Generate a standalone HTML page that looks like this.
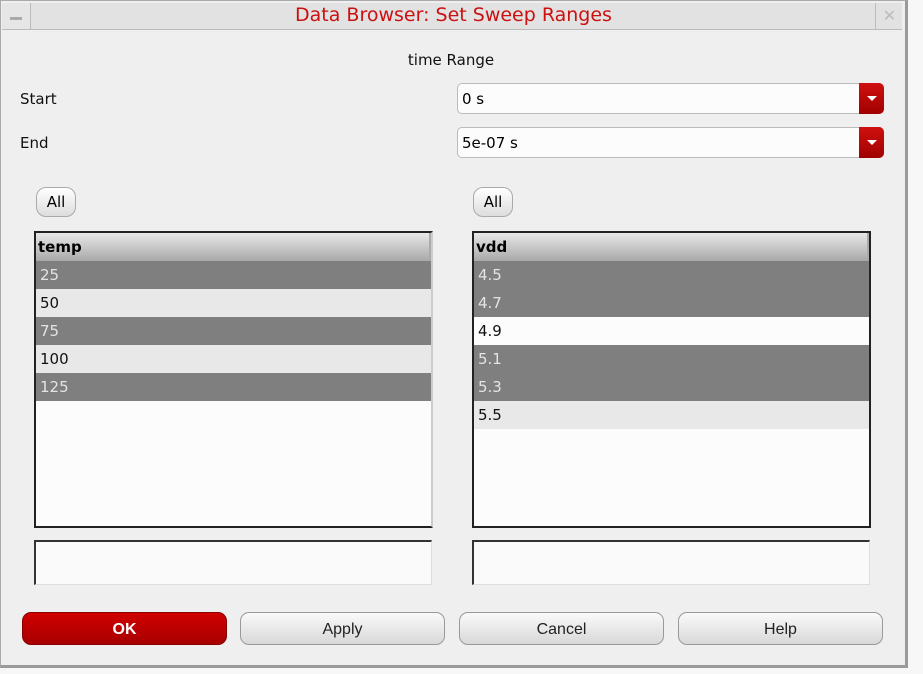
<!DOCTYPE html>
<html><head><style>
body{margin:0;width:923px;height:674px;background:#f7f7f7;font-family:"DejaVu Sans","Liberation Sans",sans-serif;position:relative;overflow:hidden}
.win{position:absolute;left:0;top:0;width:904px;height:664px;background:#efefef;border-right:3px solid #9a9a9a;border-bottom:3px solid #9a9a9a;border-left:1px solid #aaa;border-top:1px solid #aaa}
.a{position:absolute}
.tb{left:1px;top:2px;width:900px;height:26px;background:#e2e2e2;border-bottom:1px solid #bbb}
.title{left:30px;width:845px;top:3px;text-align:center;color:#cc1010;font-size:19px}
.lbl{font-size:15px;color:#111}
.combo{height:31px;background:#fcfcfc;border:1px solid #bbb;border-radius:5px;font-size:15px;line-height:30px;padding-left:4px;box-sizing:border-box}
.arr{position:absolute;right:-1px;top:-1px;width:25px;height:31px;background:linear-gradient(#d01010,#a00000);border-radius:0 5px 5px 0}
.arr:after{content:"";position:absolute;left:8px;top:13px;border-left:5px solid transparent;border-right:5px solid transparent;border-top:5px solid #fff}
.all{width:40px;height:30px;border:1px solid #aaa;border-radius:10px;background:linear-gradient(#fff,#ddd);font-size:15px;text-align:center;line-height:29px;box-sizing:border-box}
.list{background:#fcfcfc;border:2px solid #222;border-right-color:#ccc;border-bottom-color:#222;box-sizing:border-box;overflow:hidden}
.hd{height:28px;background:linear-gradient(#e8e8e8,#a8a8a8);font-weight:bold;font-size:15px;line-height:28px;padding-left:2px;border-right:2px solid #aaa}
.r{height:28px;line-height:28px;font-size:15px;padding-left:4px}
.d{background:#7f7f7f;color:#e4e4e4}.l{background:#e8e8e8;color:#111}.w{background:#fcfcfc;color:#111}
.tx{background:#fafafa;border-top:2px solid #333;border-left:2px solid #333;border-right:1px solid #ddd;border-bottom:1px solid #ddd;box-sizing:border-box}
.btn{top:611px;width:205px;height:33px;border:1px solid #999;border-radius:9px;background:linear-gradient(#fafafa,#d8d8d8);font-family:"Liberation Sans",sans-serif;font-size:16px;text-align:center;line-height:33px;box-sizing:border-box;color:#222}
</style></head><body>
<div class="win">
<div class="a tb"></div>
<div class="a" style="left:1px;top:2px;width:28px;height:26px;border-right:1px solid #bbb;background:#e6e6e6"><div class="a" style="left:8px;top:14px;width:12px;height:3px;background:#aaa"></div></div>
<div class="a" style="left:874px;top:2px;width:27px;height:26px;border-left:1px solid #bbb;color:#bbb;font-size:16px;text-align:center;line-height:26px">✕</div>
<div class="a title">Data Browser: Set Sweep Ranges</div>
<div class="a lbl" style="left:0;width:900px;text-align:center;top:50px">time Range</div>
<div class="a lbl" style="left:19px;top:89px">Start</div>
<div class="a lbl" style="left:19px;top:133px">End</div>
<div class="a combo" style="left:456px;top:82px;width:427px">0 s<div class="arr"></div></div>
<div class="a combo" style="left:456px;top:126px;width:427px">5e-07 s<div class="arr"></div></div>
<div class="a all" style="left:35px;top:186px">All</div>
<div class="a all" style="left:472px;top:186px">All</div>
<div class="a list" style="left:33px;top:230px;width:399px;height:297px">
<div class="hd">temp</div>
<div class="r d">25</div><div class="r l">50</div><div class="r d">75</div><div class="r l">100</div><div class="r d">125</div></div>
<div class="a list" style="left:471px;top:230px;width:399px;height:297px;border-right-color:#222">
<div class="hd">vdd</div>
<div class="r d">4.5</div><div class="r d">4.7</div><div class="r w">4.9</div><div class="r d">5.1</div><div class="r d">5.3</div><div class="r l">5.5</div></div>
<div class="a tx" style="left:33px;top:539px;width:398px;height:45px"></div>
<div class="a tx" style="left:471px;top:539px;width:398px;height:45px"></div>
<div class="a btn" style="left:21px;background:linear-gradient(#d00000,#a80000);color:#fff;font-weight:bold;border-color:#800">OK</div>
<div class="a btn" style="left:239px">Apply</div>
<div class="a btn" style="left:458px">Cancel</div>
<div class="a btn" style="left:677px">Help</div>
</div>
</body></html>
